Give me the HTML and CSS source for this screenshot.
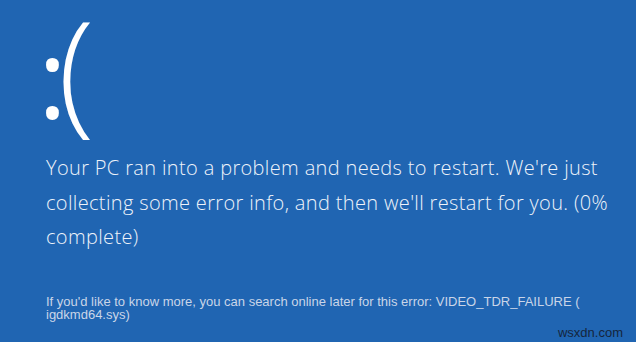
FILE: index.html
```html
<!DOCTYPE html>
<html lang="en">
<head>
<meta charset="utf-8">
<title>Your PC ran into a problem</title>
<link rel="stylesheet" href="styles.css">
</head>
<body>
<main class="screen">
  <div class="face"><span class="face-colon">:</span><span class="face-paren">(</span></div>
  <p class="message">Your PC ran into a problem and needs to restart. We're just collecting some error info, and then we'll restart for you. (0% complete)</p>
  <p class="details">If you'd like to know more, you can search online later for this error: VIDEO_TDR_FAILURE ( igdkmd64.sys)</p>
  <div class="watermark">wsxdn.com</div>
</main>
</body>
</html>
```
FILE: styles.css
```css
html, body {
  margin: 0;
  padding: 0;
  background: #2065b2;
}
.screen {
  width: 636px;
  height: 342px;
  box-sizing: border-box;
  padding: 0 0 0 46px;
  display: flex;
  flex-direction: column;
  position: relative;
}
.face {
  margin: 0 0 0 -8px;
  height: 134px;
  font-family: "Open Sans", sans-serif;
  font-weight: 300;
  font-size: 134px;
  line-height: 134px;
  color: #ffffff;
  white-space: nowrap;
}
.face-colon {
  font-size: 110px;
  line-height: 1;
  font-weight: 400;
  letter-spacing: -9px;
}
.face-paren {
  font-weight: 300;
}
.message {
  margin: 17px 0 0 0;
  width: 578px;
  font-family: "Open Sans", sans-serif;
  font-weight: 300;
  font-size: 20px;
  line-height: 34.5px;
  letter-spacing: 0.35px;
  color: #eef3fa;
}
.details {
  margin: 40px 0 0 0;
  width: 540px;
  font-family: "Liberation Sans", Arial, sans-serif;
  font-size: 13px;
  line-height: 13px;
  color: #c9d5e8;
}
.watermark {
  position: absolute;
  right: 13px;
  bottom: 2px;
  font-family: "Liberation Sans", Arial, sans-serif;
  font-size: 13px;
  color: #15263d;
}
```
